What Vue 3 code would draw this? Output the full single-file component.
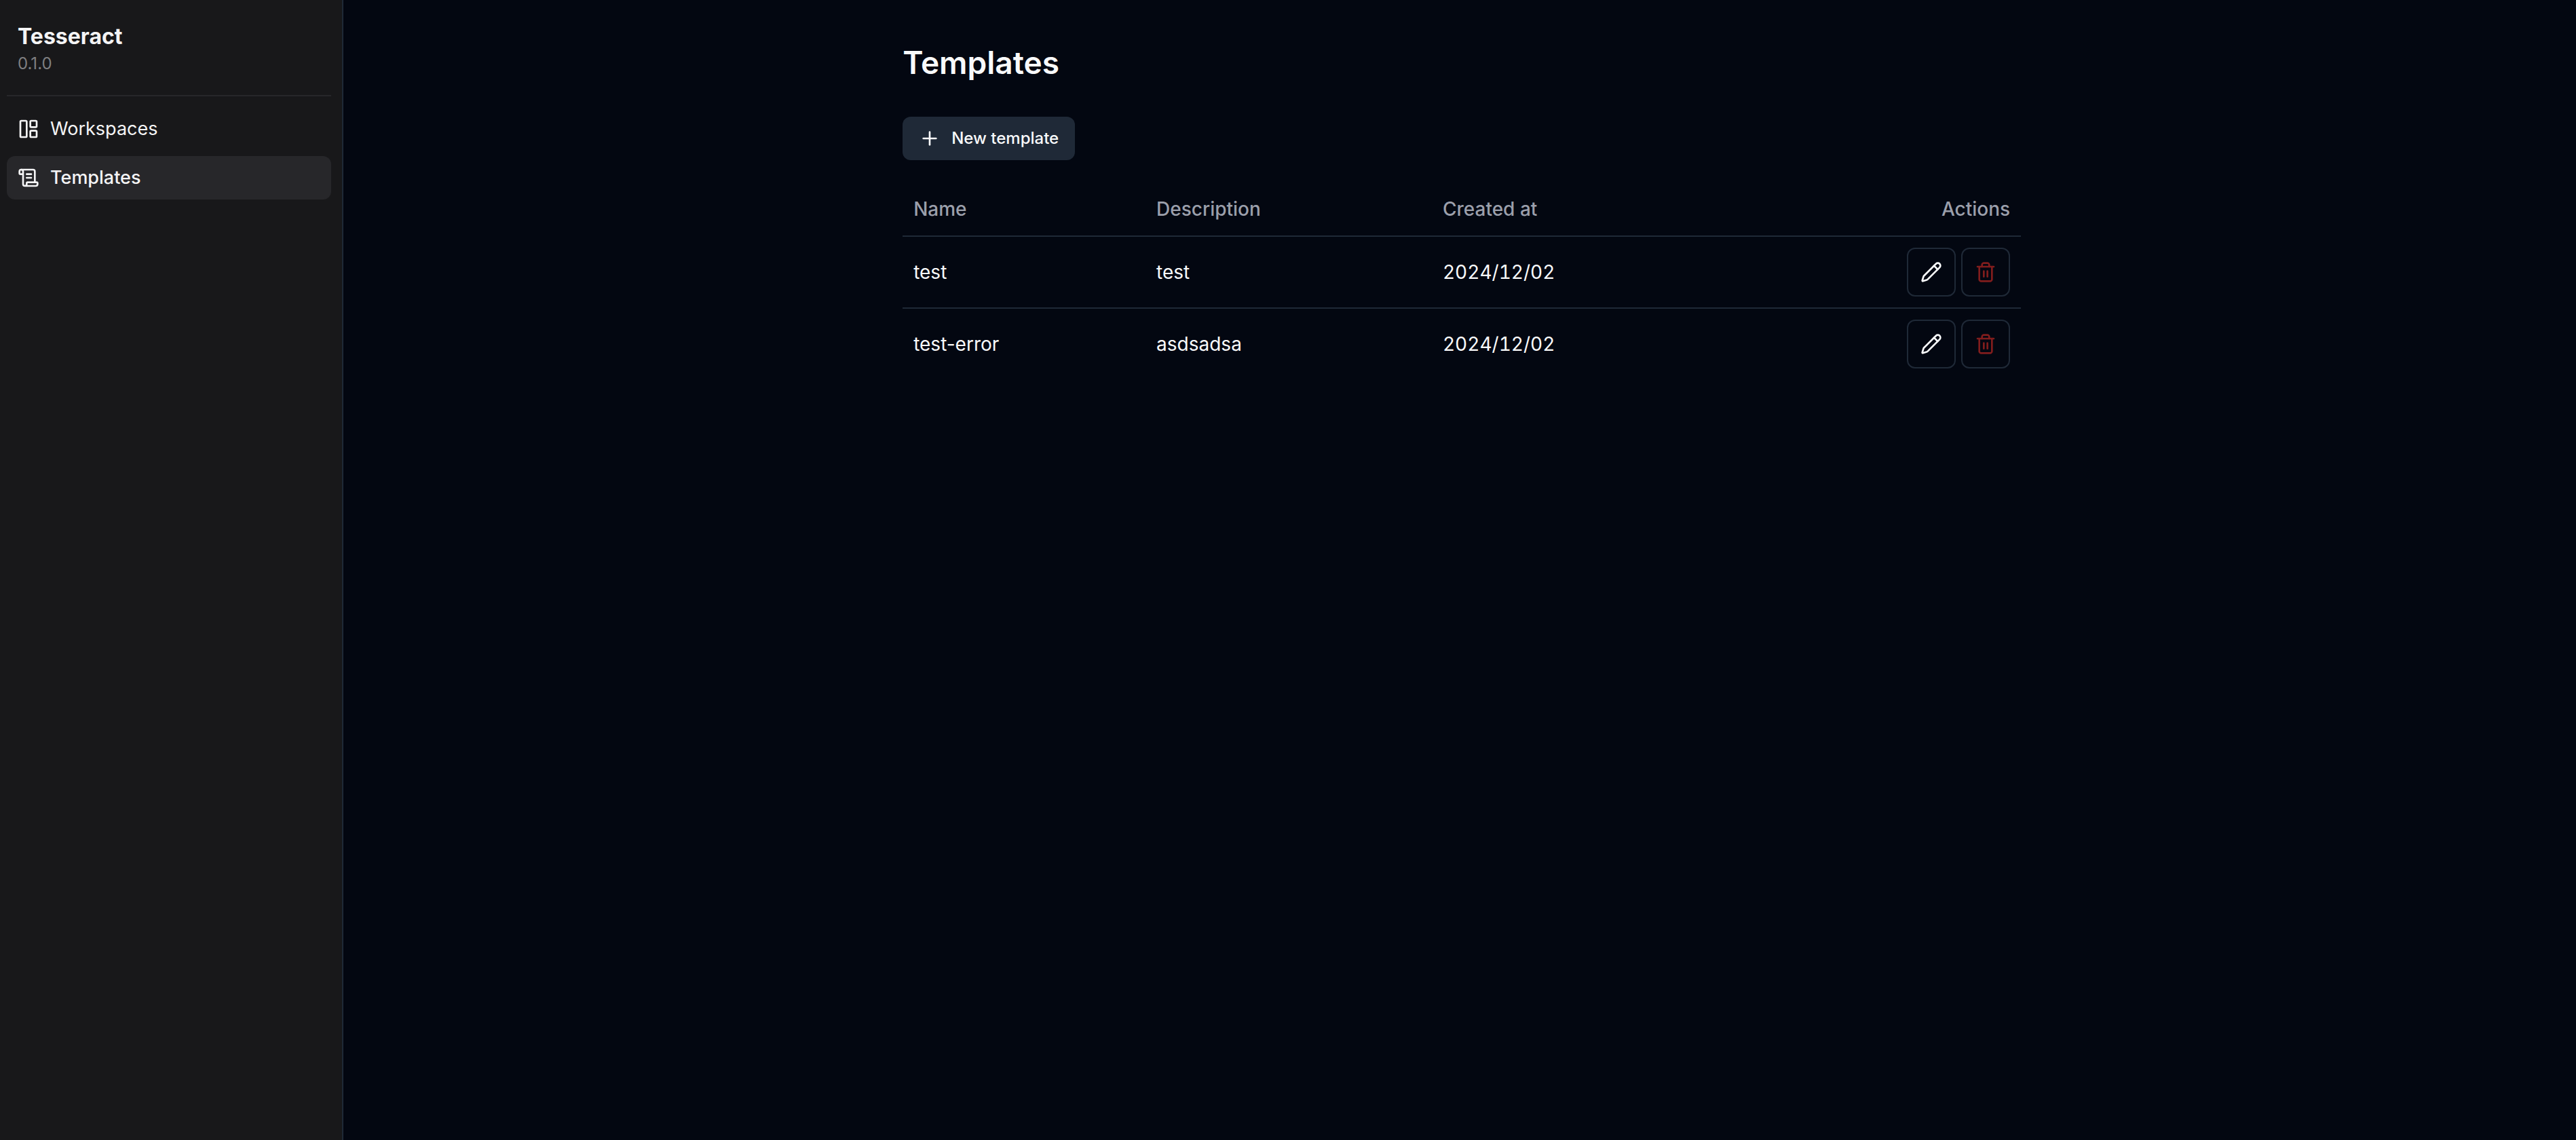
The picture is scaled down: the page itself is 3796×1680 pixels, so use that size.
<script setup>
const templates = [
  { name: 'test', description: 'test', createdAt: '2024/12/02' },
  { name: 'test-error', description: 'asdsadsa', createdAt: '2024/12/02' },
]
</script>

<template>
  <div class="app">
    <aside class="sidebar">
      <header class="brand">
        <h2 class="brand-name">Tesseract</h2>
        <p class="brand-version">0.1.0</p>
      </header>
      <nav class="nav" aria-label="Main">
        <a class="nav-link" href="#workspaces">
          <svg class="icon" viewBox="0 0 24 24" aria-hidden="true">
            <rect x="3" y="3" width="7" height="18" rx="1" />
            <rect x="14" y="3" width="7" height="7" rx="1" />
            <rect x="14" y="14" width="7" height="7" rx="1" />
          </svg>
          <span>Workspaces</span>
        </a>
        <a class="nav-link active" href="#templates" aria-current="page">
          <svg class="icon" viewBox="0 0 24 24" aria-hidden="true">
            <path d="M15 12h-5" />
            <path d="M15 8h-5" />
            <path d="M19 17V5a2 2 0 0 0-2-2H4" />
            <path d="M8 21h12a2 2 0 0 0 2-2v-1a1 1 0 0 0-1-1H11a1 1 0 0 0-1 1v1a2 2 0 1 1-4 0V5a2 2 0 1 0-4 0v2a1 1 0 0 0 1 1h3" />
          </svg>
          <span>Templates</span>
        </a>
      </nav>
    </aside>

    <main class="main">
      <div class="content">
        <h1 class="title">Templates</h1>
        <button class="new-button" type="button">
          <svg class="icon" viewBox="0 0 24 24" aria-hidden="true">
            <path d="M5 12h14" />
            <path d="M12 5v14" />
          </svg>
          <span>New template</span>
        </button>
        <table class="table">
          <thead>
            <tr>
              <th class="col-name" scope="col">Name</th>
              <th class="col-description" scope="col">Description</th>
              <th scope="col">Created at</th>
              <th class="col-actions" scope="col">Actions</th>
            </tr>
          </thead>
          <tbody>
            <tr v-for="item in templates" :key="item.name">
              <td>{{ item.name }}</td>
              <td>{{ item.description }}</td>
              <td class="date">{{ item.createdAt }}</td>
              <td>
                <div class="actions">
                  <button class="icon-button" type="button" :aria-label="`Edit ${item.name}`">
                    <svg class="icon" viewBox="0 0 24 24" aria-hidden="true">
                      <path d="M21.174 6.812a1 1 0 0 0-3.986-3.987L3.842 16.174a2 2 0 0 0-.5.83l-1.321 4.352a.5.5 0 0 0 .623.622l4.353-1.32a2 2 0 0 0 .83-.497z" />
                      <path d="m15 5 4 4" />
                    </svg>
                  </button>
                  <button class="icon-button danger" type="button" :aria-label="`Delete ${item.name}`">
                    <svg class="icon" viewBox="0 0 24 24" aria-hidden="true">
                      <path d="M3 6h18" />
                      <path d="M19 6v14c0 1-1 2-2 2H7c-1 0-2-1-2-2V6" />
                      <path d="M8 6V4c0-1 1-2 2-2h4c1 0 2 1 2 2v2" />
                      <path d="M10 11v6" />
                      <path d="M14 11v6" />
                    </svg>
                  </button>
                </div>
              </td>
            </tr>
          </tbody>
        </table>
      </div>
    </main>
  </div>
</template>

<style>
body {
  background: #030711;
}
</style>

<style scoped>
.app {
  display: flex;
  min-height: 100vh;
  background: #030711;
  color: #f9fafb;
  font-family: Inter, "Liberation Sans", sans-serif;
  font-size: 28px;
  line-height: 40px;
}

.icon {
  flex: none;
  width: 32px;
  height: 32px;
  fill: none;
  stroke: currentColor;
  stroke-width: 2;
  stroke-linecap: round;
  stroke-linejoin: round;
}

.sidebar {
  box-sizing: border-box;
  flex: none;
  width: 506px;
  padding: 16px 16px 16px 10px;
  border-right: 2px solid #1f2937;
  background: #18181a;
  color: #f4f4f5;
}

.brand {
  padding: 18px 16px 26px;
  border-bottom: 2px solid #27272a;
}

.brand-name {
  margin: 0;
  font-size: 32px;
  font-weight: 700;
  line-height: 40px;
}

.brand-version {
  margin: 0;
  color: #7f7f81;
  font-size: 24px;
  line-height: 40px;
}

.nav {
  display: flex;
  flex-direction: column;
  gap: 8px;
  padding-top: 16px;
  font-size: 27px;
}

.nav-link {
  display: flex;
  align-items: center;
  gap: 16px;
  height: 64px;
  padding: 0 16px;
  border-radius: 12px;
  color: inherit;
  text-decoration: none;
}

.nav-link.active {
  background: #27272a;
  font-weight: 500;
}

.main {
  flex: 1;
  min-width: 0;
}

.content {
  margin: 0 24.86% 0 25.05%;
  padding-top: 60px;
}

.title {
  margin: 0 0 48px;
  font-size: 46px;
  font-weight: 600;
  line-height: 64px;
}

.new-button {
  display: flex;
  align-items: center;
  gap: 16px;
  height: 64px;
  margin-bottom: 32px;
  padding: 0 24px;
  border: 0;
  border-radius: 12px;
  background: #1f2937;
  color: inherit;
  font: inherit;
  font-size: 24px;
  font-weight: 500;
}

.table {
  width: 100%;
  border-spacing: 0;
  table-layout: fixed;
}

th {
  box-sizing: border-box;
  height: 81px;
  padding: 0 16px;
  border-bottom: 2px solid #1f2937;
  color: #9b9fab;
  font-weight: 500;
  text-align: left;
}

.col-name {
  width: 21.72%;
}

.col-description {
  width: 25.6%;
}

.col-actions {
  text-align: right;
}

td {
  padding: 16px;
}

tbody tr:not(:last-child) td {
  border-bottom: 2px solid #1f2937;
}

.date {
  font-variant-numeric: tabular-nums;
}

.actions {
  display: flex;
  justify-content: flex-end;
  gap: 8px;
}

.icon-button {
  display: flex;
  align-items: center;
  justify-content: center;
  width: 72px;
  height: 72px;
  padding: 0;
  border: 2px solid #1f2937;
  border-radius: 12px;
  background: transparent;
  color: inherit;
}

.icon-button.danger {
  color: #811d1d;
}
</style>
